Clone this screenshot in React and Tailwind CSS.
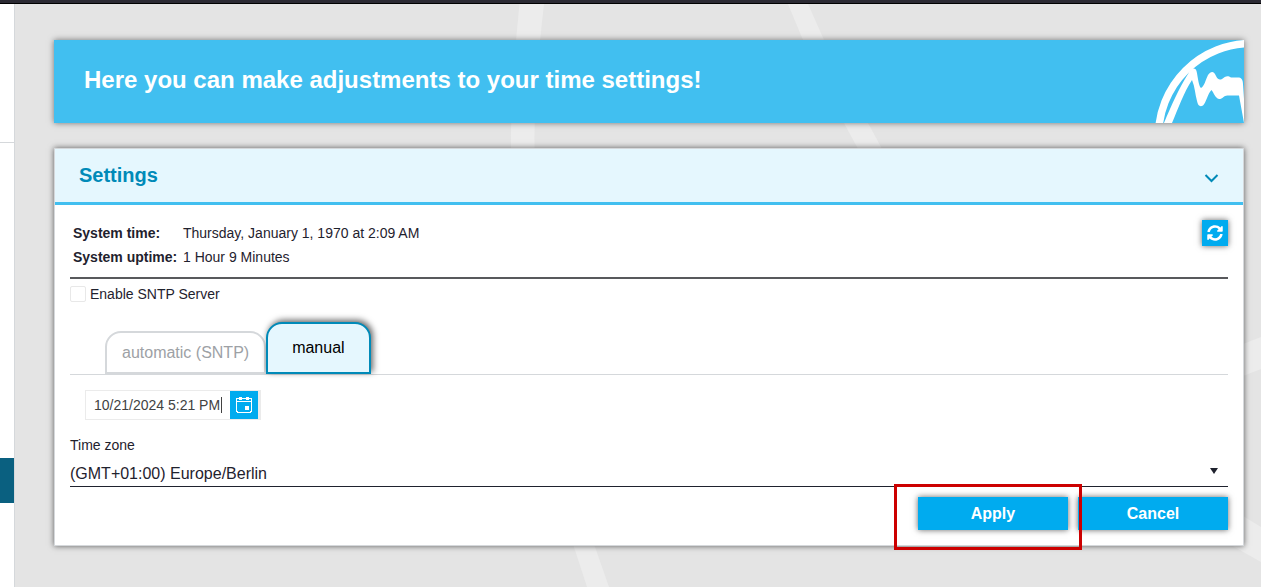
import { useState } from 'react';
import { FaSyncAlt } from 'react-icons/fa';

const TIME_ZONES = ['(GMT+01:00) Europe/Berlin', '(GMT+00:00) Europe/London', '(GMT-05:00) America/New York'];

function BackgroundRings() {
  return (
    <svg
      className="absolute inset-0 h-full w-full"
      viewBox="15 4 1246 583"
      preserveAspectRatio="xMinYMin slice"
      fill="#ececec"
      aria-hidden="true"
    >
      <path d="M519.5 4C516 40 511 90 511 147C511 300 535 450 574 547L587 587L609 587L595 547C556 450 534.500 300 534.500 147C534.500 90 540 40 544 4Z" />
      <path d="M788 4L803 40C815 68 832 102 844 123L857 147C950 310 1080 420 1238 513L1261 527L1261 562L1238 549C1060 445 960 320 881 147L868 123C852 96 834 64 824 40L808 4Z" />
      <path d="M1238 346L1261 337L1261 369L1238 378Z" />
    </svg>
  );
}

function LogoMark() {
  return (
    <svg className="h-[83px] w-[90px] shrink-0" viewBox="0 0 90 83" aria-hidden="true">
      <circle cx="97" cy="96" r="92.500" fill="none" stroke="#fff" strokeWidth="7.500" />
      <path
        d="M10 83C17 66 25 48 34 34C37 28 41 27 42.500 31C44 37 44.500 46 47 48C50 47 52 39 54 35C57 31 60 31 62 36C64 40 66 40 68 39C71 37 73 35 77 37.500H85C88 38 89 41 89 44L90 59V83L85 55.500H74C70 55 69 59 65 59C61 58 60 53 57.500 50C54 53 52 63 49 65.500C46 67 44 66 43 61C41 54 41 47 38 40C30 52 24 69 18 83Z"
        fill="#fff"
      />
    </svg>
  );
}

function CalendarIcon() {
  return (
    <svg width="16" height="16" viewBox="0 0 16 16" fill="#fff" aria-hidden="true">
      <path
        d="M0 1H3V0H6V1H10V0H13V1H16V15H15V16H1V15H0ZM1 5V14H2V15H14V14H15V5ZM1 2V4H15V2H13V3H10V2H6V3H3V2ZM9 9H13V13H9Z"
        fillRule="evenodd"
      />
    </svg>
  );
}

function Sidebar() {
  return (
    <aside className="w-[15px] shrink-0 border-r border-[#d5d8db] bg-white">
      <div className="h-[139px] border-b border-[#d5d8db]" />
      <div className="mt-[315px] h-[45px] bg-[#0a6080]" />
    </aside>
  );
}

function ActionButton({ children }) {
  return (
    <button
      type="button"
      className="h-[33px] w-[150px] bg-[#00abef] text-base font-bold text-white shadow-[0_0_6px_rgba(0,0,0,0.6)]"
    >
      {children}
    </button>
  );
}

export default function App() {
  const [sntpServer, setSntpServer] = useState(false);
  const [tab, setTab] = useState('manual');
  const [date, setDate] = useState('10/21/2024 5:21 PM');
  const [zone, setZone] = useState(TIME_ZONES[0]);

  const tabClass = (name) =>
    name === tab
      ? 'h-[52px] px-6 border-[#008ab8] bg-[#e5f7fe] text-black shadow-[2px_-2px_6px_rgba(0,0,0,0.6)]'
      : 'h-[43px] px-[15px] border-[#d5d8db] bg-white text-[#9da1a5]';

  return (
    <div className="flex min-h-screen flex-col bg-[#e4e4e4] font-['Liberation_Sans',Arial,sans-serif] text-sm text-[#1f222e]">
      <header className="h-1 border-b border-black bg-[#2b2a33]" />
      <div className="flex flex-1">
        <Sidebar />
        <main className="relative min-w-0 flex-1 overflow-hidden pt-9 pr-[17px] pb-10 pl-[39px]">
          <BackgroundRings />

          <section className="relative flex items-center justify-between bg-[#41bff0] pl-[30px] shadow-[0_0_6px_rgba(0,0,0,0.5)]">
            <h1 className="pb-1 text-2xl font-bold text-white">Here you can make adjustments to your time settings!</h1>
            <LogoMark />
          </section>

          <section className="relative mt-[25px] border border-[#d5d8db] bg-white shadow-[0_0_6px_rgba(0,0,0,0.6)]">
            <div className="flex h-14 items-center justify-between border-b-3 border-[#41bff0] bg-[#e5f7fe] px-6">
              <h2 className="pb-0.5 text-xl font-bold text-[#008ab8]">Settings</h2>
              <button type="button" aria-label="Collapse settings" className="pt-1.5">
                <svg width="15" height="9" viewBox="0 0 15 9" fill="none" stroke="#008ab8" strokeWidth="2" aria-hidden="true">
                  <path d="M1.500 1L7.500 7L13.500 1" />
                </svg>
              </button>
            </div>

            <div className="px-[15px] pb-[15px]">
              {/* Clock info */}
              <div className="flex items-start justify-between border-b-2 border-[#58595c] pt-4 pb-2">
                <dl className="grid grid-cols-[110px_auto] pl-[3px] leading-6">
                  <dt className="font-bold">System time:</dt>
                  <dd>Thursday, January 1, 1970 at 2:09 AM</dd>
                  <dt className="font-bold">System uptime:</dt>
                  <dd>1 Hour 9 Minutes</dd>
                </dl>
                <button
                  type="button"
                  aria-label="Refresh"
                  className="-mt-px flex size-[26px] items-center justify-center bg-[#00abef] text-base text-white shadow-[0_0_6px_rgba(0,0,0,0.6)]"
                >
                  <FaSyncAlt />
                </button>
              </div>

              <label className="mt-[5px] flex items-center gap-1 leading-5">
                <input
                  type="checkbox"
                  checked={sntpServer}
                  onChange={(e) => setSntpServer(e.target.checked)}
                  className="size-4 appearance-none rounded-xs border border-[#e8e8e8] bg-white checked:bg-[#00abef]"
                />
                Enable SNTP Server
              </label>

              {/* Tabs */}
              <div role="tablist" className="mt-[18px] flex items-end border-b border-[#d5d8db] pl-[35px] text-base">
                <button
                  type="button"
                  role="tab"
                  aria-selected={tab === 'automatic'}
                  onClick={() => setTab('automatic')}
                  className={`rounded-t-2xl border-2 ${tabClass('automatic')}`}
                >
                  automatic (SNTP)
                </button>
                <button
                  type="button"
                  role="tab"
                  aria-selected={tab === 'manual'}
                  onClick={() => setTab('manual')}
                  className={`rounded-t-2xl border-2 ${tabClass('manual')}`}
                >
                  manual
                </button>
              </div>

              {/* Date picker */}
              <div className="relative mt-[15px] ml-[15px] flex h-[30px] w-44 border border-[#ebebeb] bg-[#ebebeb]">
                <input
                  type="text"
                  aria-label="Date and time"
                  value={date}
                  onChange={(e) => setDate(e.target.value)}
                  className="w-36 bg-white pl-2 text-[#424242] outline-none"
                />
                {/* Text cursor */}
                <span className="pointer-events-none absolute top-1.5 left-[135px] h-4 w-px bg-[#424242]" />
                <button type="button" aria-label="Open calendar" className="flex w-7 items-center justify-center bg-[#00abef]">
                  <CalendarIcon />
                </button>
              </div>

              <label htmlFor="time-zone" className="mt-[15px] block leading-5">
                Time zone
              </label>
              <div className="relative mt-1 border-b border-[#1f222e]">
                <select
                  id="time-zone"
                  value={zone}
                  onChange={(e) => setZone(e.target.value)}
                  className="block h-[27px] w-full appearance-none pt-0.5 text-base outline-none"
                >
                  {TIME_ZONES.map((name) => (
                    <option key={name}>{name}</option>
                  ))}
                </select>
                <svg className="pointer-events-none absolute top-[9px] right-2.5" width="8" height="6" viewBox="0 0 8 6" fill="#1f222e" aria-hidden="true">
                  <path d="M0 0H8L4 6Z" />
                </svg>
              </div>

              <div className="mt-2.5 flex justify-end gap-2.5">
                <div className="relative">
                  <ActionButton>Apply</ActionButton>
                  <span className="pointer-events-none absolute -top-[13px] -right-3.5 -bottom-5 -left-6 z-10 border-3 border-[#cc0000]" />
                </div>
                <ActionButton>Cancel</ActionButton>
              </div>
            </div>
          </section>
        </main>
      </div>
    </div>
  );
}
